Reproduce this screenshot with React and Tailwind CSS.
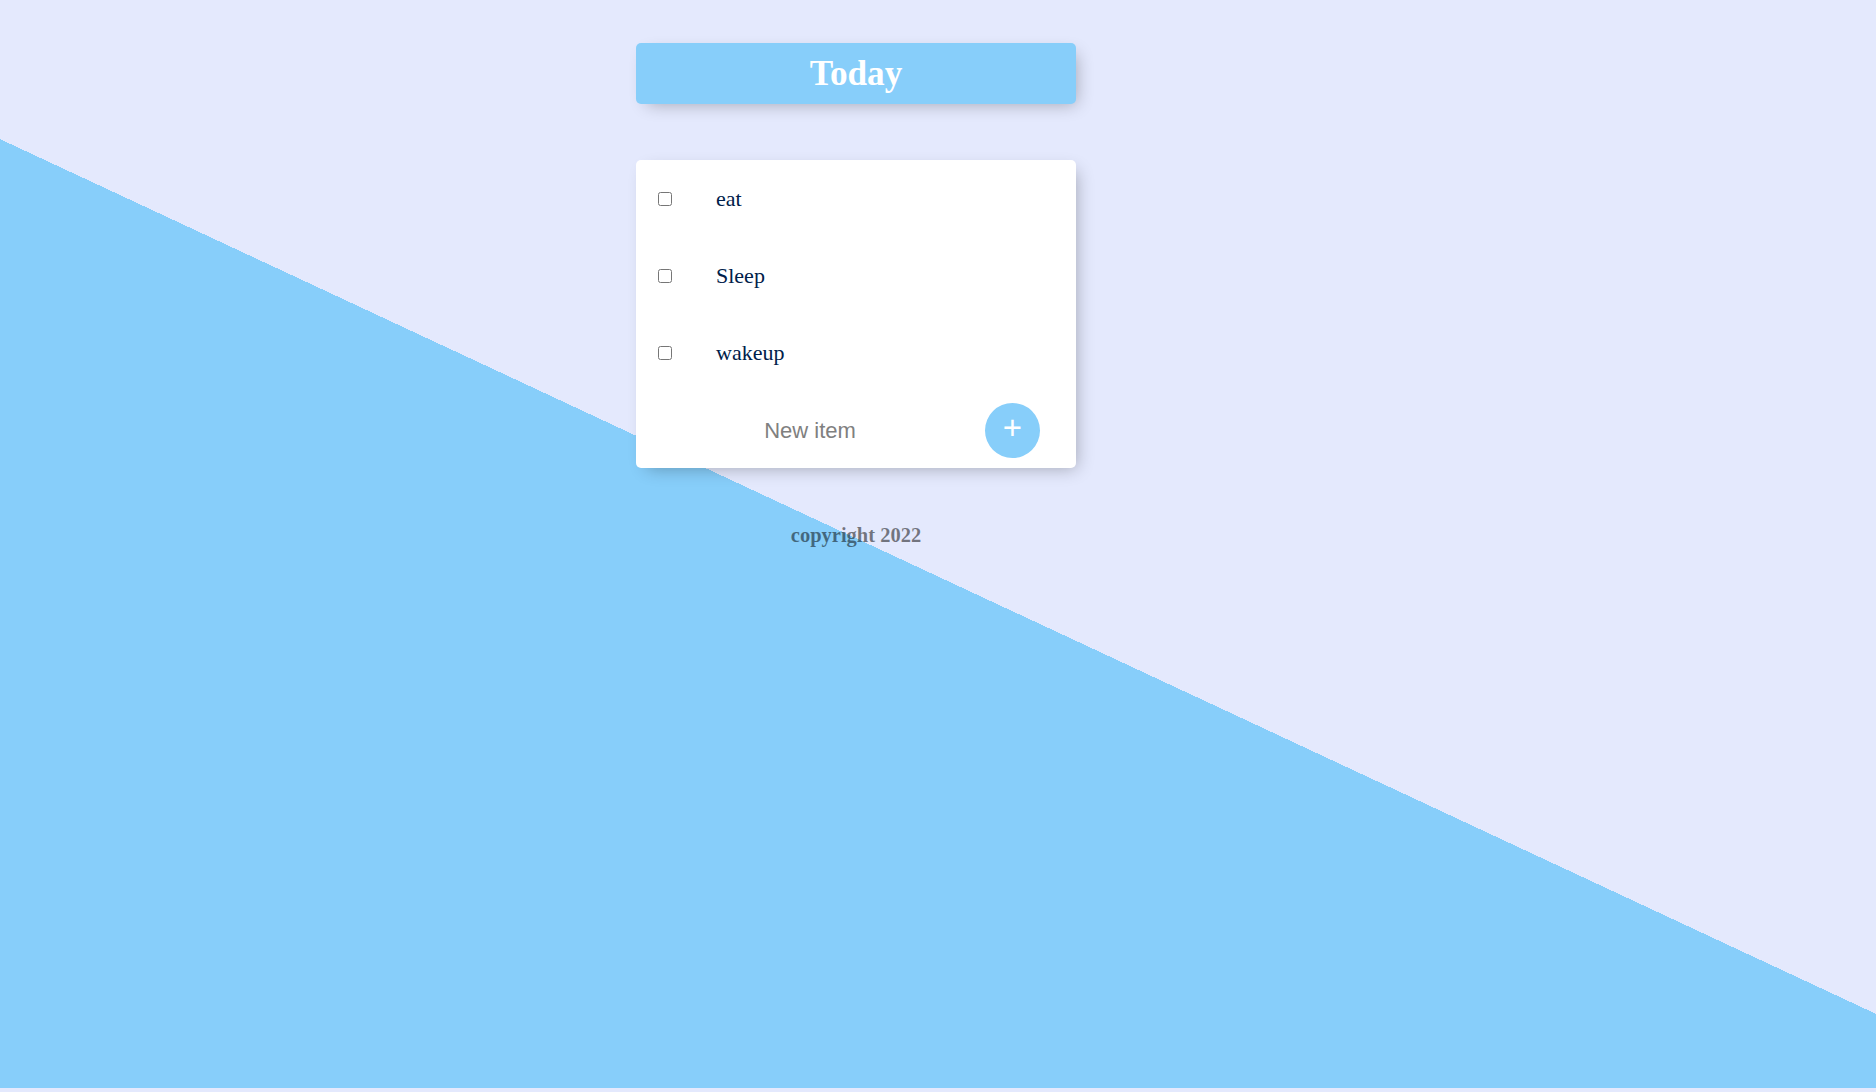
import React, { useState } from 'react';

const initialItems = ['eat', 'Sleep', 'wakeup'];

const App = () => {
  const [items, setItems] = useState(initialItems);
  const [text, setText] = useState('');

  const addItem = (e) => {
    e.preventDefault();
    if (!text.trim()) return;
    setItems([...items, text.trim()]);
    setText('');
  };

  return (
    <div className="min-h-[1092px] bg-[#e4e9fd] font-['Liberation_Serif',serif]">
      {/* diagonal split background */}
      <div className="h-[1088px] bg-[linear-gradient(25deg,#87cefa_860px,#e4e9fd_860px)] pt-[43px]">
        <div className="ml-[636px] w-[440px] flex flex-col">

          {/* HEADING */}
          <div className="h-[61px] pt-[2px] bg-[#87cefa] rounded-[5px] shadow-[5.5px_5.5px_16.5px_-5.5px_rgba(0,0,0,0.3)] flex items-center justify-center">
            <h1 className="text-[35.2px] font-bold text-white leading-normal">Today</h1>
          </div>

          {/* LIST */}
          <div className="mt-[56px] bg-white rounded-[5px] shadow-[5.5px_5.5px_16.5px_-5.5px_rgba(0,0,0,0.3)] flex flex-col">
            {items.map((item, i) => (
              <div key={i} className="h-[77px] flex items-center pl-[22px]">
                <input type="checkbox" className="w-[14px] h-[14px] m-0" />
                <p className="ml-[44px] text-[22px] leading-normal text-[#00204a]">{item}</p>
              </div>
            ))}
            <form onSubmit={addItem} className="h-[77px] flex items-center pl-[2px] pt-[2px]">
              <input
                type="text"
                value={text}
                onChange={(e) => setText(e.target.value)}
                placeholder="New item"
                autoComplete="off"
                className="w-[344px] h-[66px] text-center bg-transparent border-0 outline-none text-[22px] font-['Liberation_Sans',Arial,sans-serif] placeholder:text-[#808080]"
              />
              <button
                type="submit"
                className="ml-[3px] w-[55px] h-[55px] rounded-full bg-[#87cefa] text-white text-[33px] leading-none pb-[6.6px] flex items-center justify-center font-['Liberation_Sans',Arial,sans-serif]"
              >
                +
              </button>
            </form>
          </div>

          {/* FOOTER */}
          <footer className="mt-[52px] text-center text-[20.5px] font-bold leading-normal text-black/50">
            copyright 2022
          </footer>
        </div>
      </div>
    </div>
  );
};

export default App;
